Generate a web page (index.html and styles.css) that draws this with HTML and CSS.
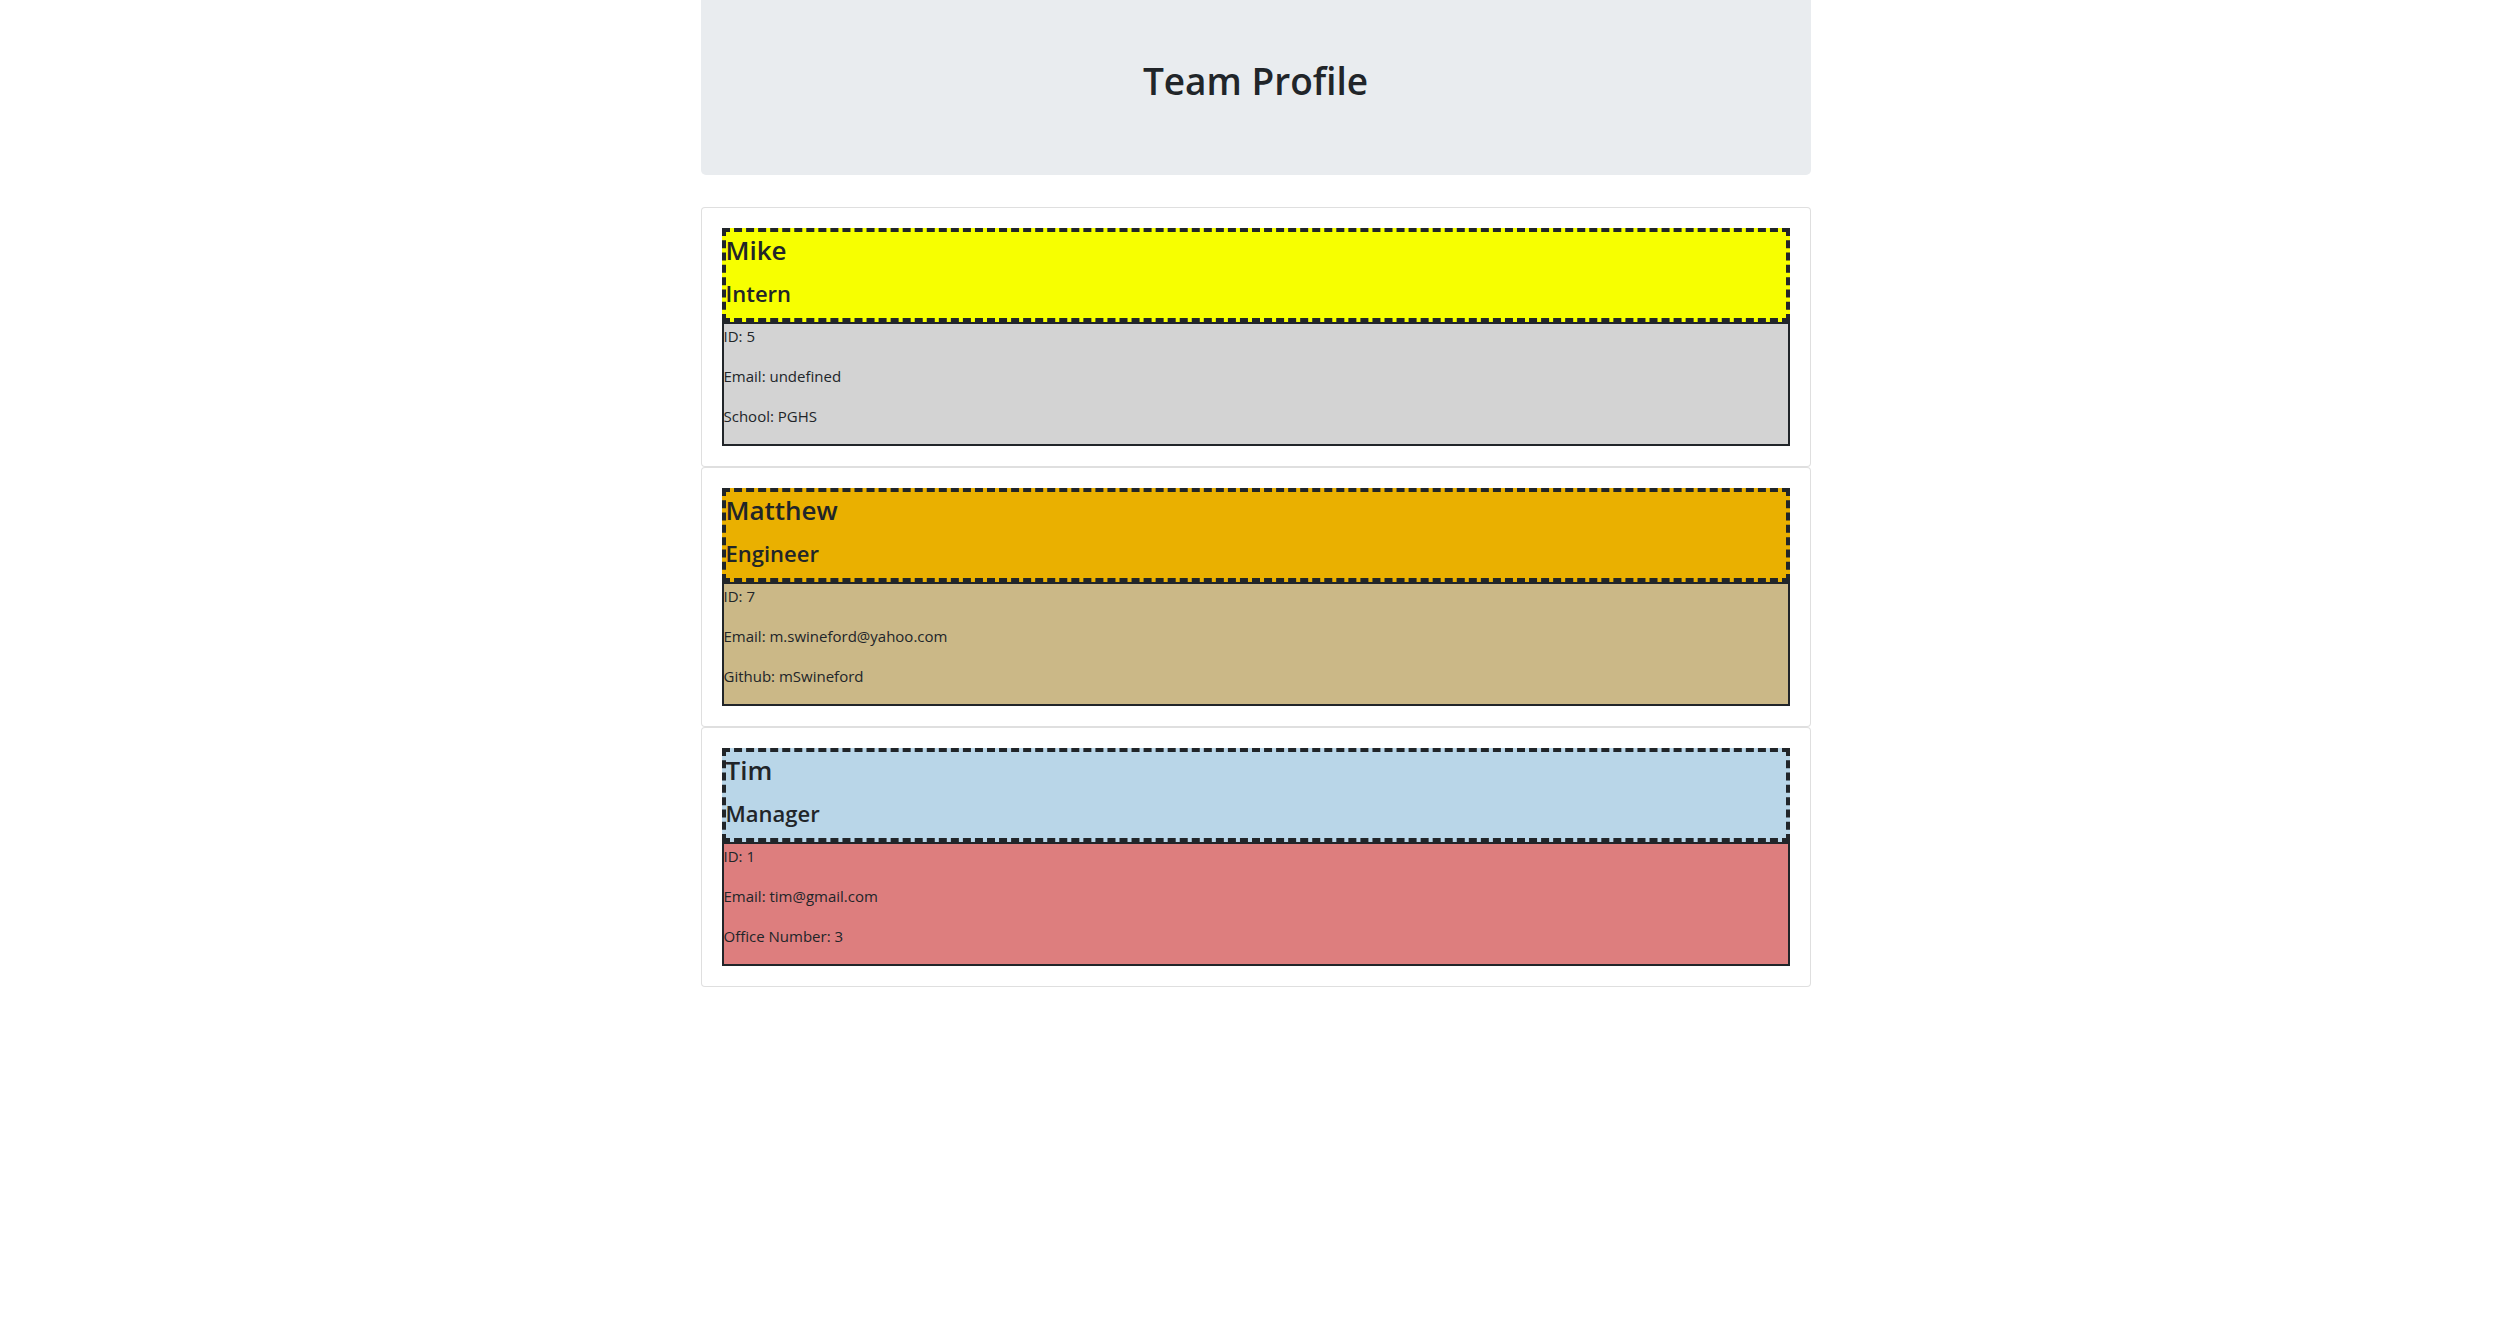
FILE: index.html
```html
<!DOCTYPE html>
<html lang="en">
<head>
<meta charset="UTF-8">
<title>Team Profile</title>
<link rel="stylesheet" href="styles.css">
</head>
<body>
<div class="container">
  <header class="jumbotron">
    <h1 class="title">Team Profile</h1>
  </header>

  <div class="card">
    <div class="card-body">
      <div class="member-head intern">
        <h3 class="member-name">Mike</h3>
        <h4 class="member-role">Intern</h4>
      </div>
      <div class="member-info intern-info">
        <p>ID: 5</p>
        <p>Email: undefined</p>
        <p>School: PGHS</p>
      </div>
    </div>
  </div>

  <div class="card">
    <div class="card-body">
      <div class="member-head engineer">
        <h3 class="member-name">Matthew</h3>
        <h4 class="member-role">Engineer</h4>
      </div>
      <div class="member-info engineer-info">
        <p>ID: 7</p>
        <p>Email: m.swineford@yahoo.com</p>
        <p>Github: mSwineford</p>
      </div>
    </div>
  </div>

  <div class="card">
    <div class="card-body">
      <div class="member-head manager">
        <h3 class="member-name">Tim</h3>
        <h4 class="member-role">Manager</h4>
      </div>
      <div class="member-info manager-info">
        <p>ID: 1</p>
        <p>Email: tim@gmail.com</p>
        <p>Office Number: 3</p>
      </div>
    </div>
  </div>
</div>
</body>
</html>
```

FILE: styles.css
```css
* {
  box-sizing: border-box;
}

body {
  margin: 0;
  font-family: "Open Sans", "Noto Sans", Roboto, sans-serif;
  font-size: 16px;
  line-height: 1.5;
  color: #212529;
  background: #ffffff;
}

.container {
  width: 1140px;
  margin: 0 auto;
  padding: 0 15px;
}

.jumbotron {
  background: #e9ecef;
  border-radius: 0 0 5px 5px;
  padding: 58px 32px 63px;
  margin-bottom: 32px;
  text-align: center;
}

.title {
  margin: 0 0 8px;
  font-size: 37px;
  font-weight: 600;
  line-height: 46px;
  color: #212529;
}

.card {
  border: 1px solid rgba(0, 0, 0, 0.125);
  border-radius: 4px;
  background: #ffffff;
}

.card-body {
  padding: 20px;
}

.member-head {
  border: 4px dashed #212529;
}

.member-name {
  margin: 0;
  font-size: 26px;
  font-weight: 600;
  line-height: 36px;
}

.member-role {
  margin: 0;
  font-size: 22px;
  font-weight: 600;
  line-height: 50px;
}

.member-info {
  border: 2px solid #212529;
  font-size: 15px;
  line-height: 24px;
}

.member-info p {
  margin: 0 0 16px;
}

.intern { background: #f7ff00; }
.intern-info { background: #d3d3d3; }

.engineer { background: #eab000; }
.engineer-info { background: #cbb887; }

.manager { background: #b9d6e8; }
.manager-info { background: #dd7e7e; }
```
